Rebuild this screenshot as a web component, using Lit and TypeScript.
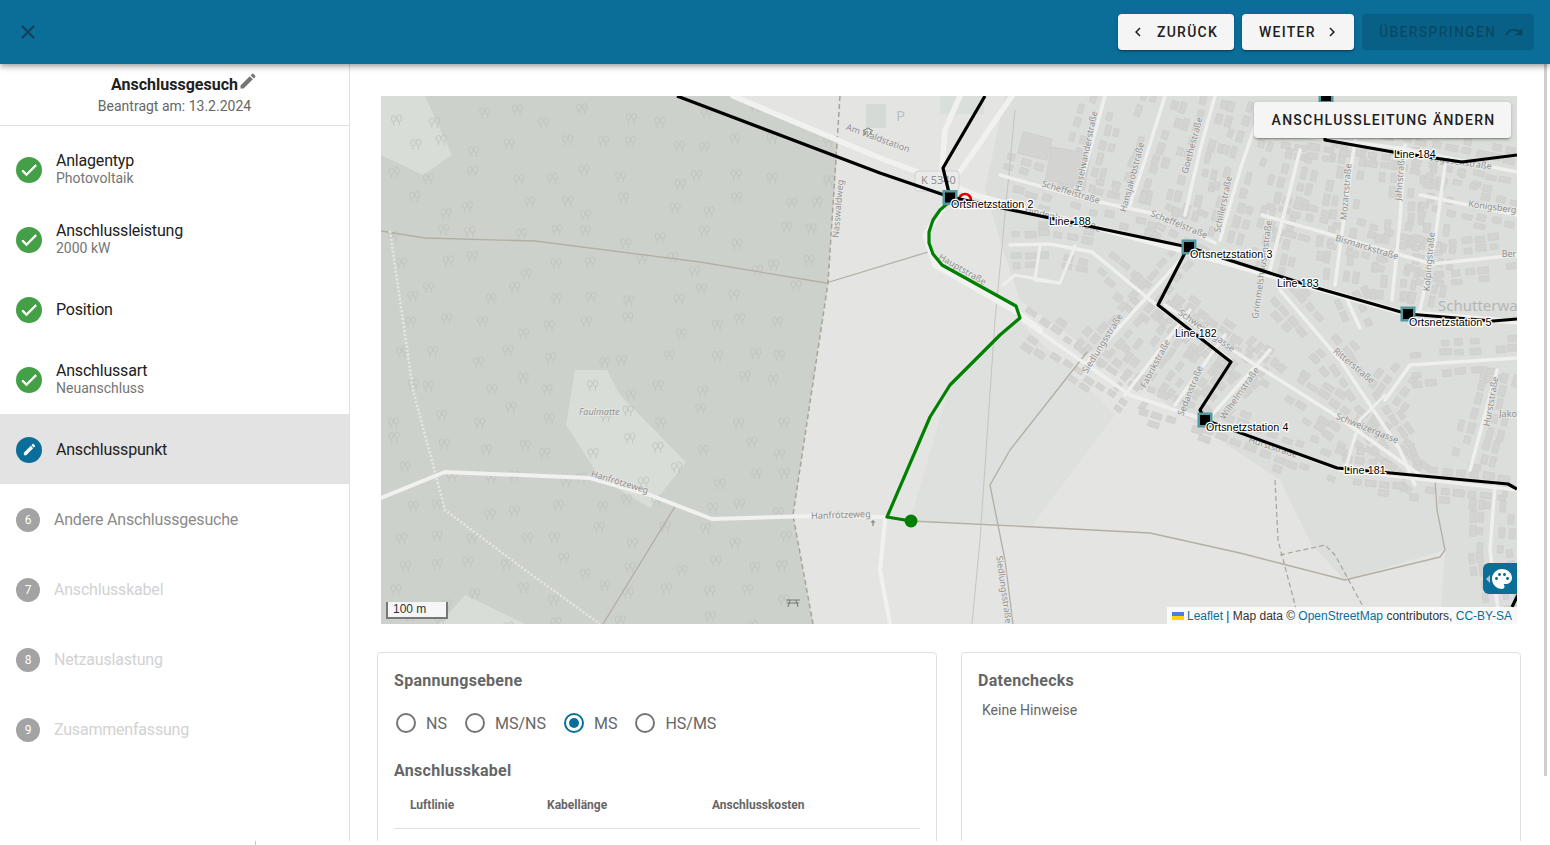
import {LitElement, css, html, svg} from 'lit'
import {customElement} from 'lit/decorators.js'

type Pt = [number, number]

const ICONS = {
  close: 'M19 6.41 17.59 5 12 10.59 6.41 5 5 6.41 10.59 12 5 17.59 6.41 19 12 13.41 17.59 19 19 17.59 13.41 12z',
  check: 'M9 16.17 4.83 12l-1.42 1.41L9 19 21 7l-1.41-1.41z',
  pencil: 'M3 17.25V21h3.75L17.81 9.94l-3.75-3.75L3 17.25zM20.71 7.04c.39-.39.39-1.02 0-1.41l-2.34-2.34c-.39-.39-1.02-.39-1.41 0l-1.83 1.83 3.75 3.75 1.83-1.83z',
  left: 'M15.41 7.41 14 6l-6 6 6 6 1.41-1.41L10.83 12z',
  right: 'M10 6 8.59 7.41 13.17 12l-4.58 4.59L10 18l6-6z',
  redo: 'M18.4 10.6C16.55 8.99 14.15 8 11.5 8c-4.65 0-8.58 3.03-9.96 7.22L3.9 16c1.05-3.19 4.05-5.5 7.6-5.5 1.95 0 3.73.72 5.12 1.88L13 16h9V7l-3.6 3.6z',
  palette: 'M12 2C6.49 2 2 6.49 2 12s4.49 10 10 10c1.38 0 2.5-1.12 2.5-2.5 0-.61-.23-1.2-.64-1.67-.08-.1-.13-.21-.13-.33 0-.28.22-.5.5-.5H16c3.31 0 6-2.69 6-6 0-4.96-4.49-9-10-9zm-5.5 11c-.83 0-1.5-.67-1.5-1.5S5.67 10 6.5 10s1.5.67 1.5 1.5S7.33 13 6.5 13zm3-4C8.67 9 8 8.33 8 7.5S8.67 6 9.5 6s1.5.67 1.5 1.5S10.33 9 9.5 9zm5 0c-.83 0-1.5-.67-1.5-1.5S13.67 6 14.5 6s1.5.67 1.5 1.5S15.33 9 14.5 9zm3 4c-.83 0-1.5-.67-1.5-1.5s.67-1.5 1.5-1.5 1.5.67 1.5 1.5-.67 1.5-1.5 1.5z',
}

const icon = (d: string, size = 24) => html`<svg width=${size} height=${size} viewBox="0 0 24 24" fill="currentColor"><path d=${d}></path></svg>`

const pts = (p: Pt[]) => p.map(q => q.join(',')).join(' ')

// Strassen im Wohngebiet, an ihnen entlang werden die Haeuser erzeugt
const STREETS: Pt[][] = [
  [[1000, 175], [1090, 200], [1160, 215], [1215, 243]],
  [[1105, 96], [1090, 150], [1078, 195]],
  [[1165, 96], [1145, 160], [1130, 205]],
  [[1215, 96], [1200, 150], [1185, 215]],
  [[1262, 105], [1240, 170], [1220, 240]],
  [[1300, 150], [1285, 210], [1270, 270]],
  [[1355, 140], [1345, 210], [1335, 285]],
  [[1405, 145], [1400, 220], [1392, 300]],
  [[1445, 165], [1435, 240], [1420, 310]],
  [[1265, 132], [1400, 148], [1517, 172]],
  [[1262, 215], [1350, 240], [1432, 264], [1517, 255]],
  [[1420, 195], [1517, 215]],
  [[1010, 245], [1050, 244], [1092, 252], [1150, 300], [1230, 360]],
  [[1185, 255], [1135, 310], [1085, 365]],
  [[1165, 305], [1240, 355], [1335, 415], [1420, 475]],
  [[1190, 310], [1125, 395]],
  [[1225, 335], [1175, 405]],
  [[1270, 350], [1212, 415]],
  [[1280, 290], [1340, 360], [1400, 450], [1415, 485]],
  [[1345, 295], [1360, 328]],
  [[1385, 400], [1410, 365], [1517, 358]],
  [[1497, 370], [1470, 470]],
  [[1020, 318], [1130, 395], [1205, 420], [1340, 470], [1517, 490]],
  [[1495, 485], [1490, 550], [1500, 624]],
]

const MINOR_ROADS: Pt[][] = [
  [[1040, 245], [1035, 280], [1060, 283], [1075, 246]],
  [[1003, 285], [1015, 275], [1060, 283]],
  [[1345, 470], [1360, 420], [1385, 395]],
]

const LABELS: [string, number, number, number][] = [
  ['Am Waldstation', 877, 141, 20],
  ['Nasswaldweg', 841, 209, -85],
  ['Hanfrötzeweg', 619, 485, 17],
  ['Hanfrötzeweg', 841, 518, -2],
  ['Hauptstraße', 961, 272, 30],
  ['Siedlungsstraße', 1001, 590, 82],
  ['Scheffelstraße', 1070, 195, 17],
  ['Scheffelstraße', 1178, 227, 22],
  ['Hindenburgstraße', 1062, 222, 15],
  ['Hansjakobstraße', 1135, 178, -75],
  ['Haselwanderstraße', 1089, 152, -78],
  ['Goethestraße', 1195, 146, -75],
  ['Schillerstraße', 1226, 205, -78],
  ['Grimmelshausenstraße', 1265, 270, -82],
  ['Mozartstraße', 1349, 192, -85],
  ['Jahnstraße', 1403, 178, -85],
  ['Kolpingstraße', 1432, 262, -85],
  ['Bismarckstraße', 1366, 250, 17],
  ['Königsberg', 1492, 210, 8],
  ['Vogesenstraße', 1460, 165, 8],
  ['Siedlungsstraße', 1105, 345, -58],
  ['Fabrikstraße', 1158, 365, -62],
  ['Sedanstraße', 1193, 392, -68],
  ['Wilhelmstraße', 1242, 395, -55],
  ['Schweizergasse', 1205, 333, 35],
  ['Ritterstraße', 1352, 368, 40],
  ['Schweizergasse', 1366, 431, 22],
  ['Hurststraße', 1494, 402, -80],
  ['Hurststraße', 1272, 450, 18],
  ['Ber', 1509, 257, 0],
  ['Jako', 1508, 417, 0],
]

function seeded(seed: number) {
  let s = seed
  return () => {
    s = (s * 1664525 + 1013904223) % 4294967296
    return s / 4294967296
  }
}

function buildings() {
  const rnd = seeded(11)
  const out: {x: number, y: number, w: number, h: number, a: number}[] = []
  for (const street of STREETS) {
    for (let i = 0; i < street.length - 1; i++) {
      const [a, b] = [street[i], street[i + 1]]
      const len = Math.hypot(b[0] - a[0], b[1] - a[1])
      const ux = (b[0] - a[0]) / len
      const uy = (b[1] - a[1]) / len
      for (let d = 6; d < len; d += 12 + rnd() * 5) {
        for (const side of [-1, 1]) {
          for (const row of [9, 18]) {
            if (rnd() < (row === 9 ? 0.15 : 0.55)) continue
            const off = row + rnd() * 3
            out.push({
              x: a[0] + ux * d - uy * off * side,
              y: a[1] + uy * d + ux * off * side,
              w: 7 + rnd() * 5,
              h: 5 + rnd() * 2,
              a: Math.atan2(uy, ux) * 180 / Math.PI,
            })
          }
        }
      }
    }
  }
  return out
}

function trees() {
  const rnd = seeded(5)
  const out: Pt[] = []
  for (let y = 100; y < 624; y += 30) {
    for (let x = 385; x < 845; x += 38) {
      out.push([x + rnd() * 26, y + rnd() * 20])
    }
  }
  return out
}

const BUILDINGS = buildings()
const TREES = trees()
const FOREST: Pt[] = [[381, 96], [730, 96], [838, 140], [828, 283], [793, 515], [813, 624], [381, 624]]
const STATIONS: Pt[] = [[950, 197.5], [1189, 247], [1408, 314], [1205, 420], [1326, 96]]

@customElement('grid-map')
export class GridMap extends LitElement {

  static styles = css`
    :host {
      display: block;
      position: relative;
      height: 528px;
      overflow: hidden;
      background: #e4e4e2;
      font-family: "Liberation Sans", Arial, sans-serif;
    }

    .canvas {
      display: block;
    }

    .street-label {
      font: 9px "Noto Sans", sans-serif;
      fill: #8f8f8f;
      paint-order: stroke;
      stroke: rgba(235, 235, 233, 0.8);
      stroke-width: 1.5px;
    }

    .place-label {
      font: 15px "Noto Sans", sans-serif;
      fill: #b4b6b4;
    }

    .grid-label {
      font: 10.7px "Liberation Sans", sans-serif;
      letter-spacing: 0.1px;
      fill: #000;
      paint-order: stroke;
      stroke: #fff;
      stroke-width: 2.5px;
      stroke-linejoin: round;
    }

    .change-line {
      position: absolute;
      top: 6px;
      right: 6px;
      width: 257px;
      height: 36px;
      box-sizing: border-box;
      padding: 0 0 0 2px;
      border: none;
      border-radius: 4px;
      background: #f5f5f5;
      color: #212121;
      font: 500 14px Roboto, sans-serif;
      letter-spacing: 1.25px;
      box-shadow: 0 3px 1px -2px rgba(0,0,0,.2), 0 2px 2px 0 rgba(0,0,0,.14), 0 1px 5px 0 rgba(0,0,0,.12);
    }

    .palette-tab {
      position: absolute;
      right: 0;
      top: 467px;
      width: 34px;
      height: 31px;
      display: flex;
      align-items: center;
      justify-content: flex-end;
      padding-right: 3px;
      box-sizing: border-box;
      border-radius: 6px 0 0 6px;
      background: #0b6e99;
      color: #fff;
    }

    .palette-tab::before {
      content: '';
      position: absolute;
      left: 3px;
      top: 12px;
      border: 4px solid transparent;
      border-left-width: 0;
      border-right-color: #a9c5d2;
    }

    .scale {
      position: absolute;
      left: 5px;
      bottom: 5px;
      width: 62px;
      height: 17px;
      box-sizing: border-box;
      padding-left: 5px;
      border: 2px solid #777;
      border-top: none;
      background: rgba(255, 255, 255, 0.8);
      color: #333;
      font-size: 12px;
      line-height: 15px;
    }

    .attribution {
      position: absolute;
      right: 0;
      bottom: 0;
      height: 17px;
      display: flex;
      align-items: center;
      gap: 3px;
      padding: 0 5px;
      white-space: pre;
      background: rgba(255, 255, 255, 0.8);
      color: #333;
      font-size: 12px;
    }

    .attribution a {
      color: #0b6e99;
    }
  `

  render() {
    return html`
      <svg class="canvas" width="1136" height="528" viewBox="381 96 1136 528">
        <defs>
          <clipPath id="forest"><polygon points=${pts(FOREST)}></polygon></clipPath>
          <g id="tree" fill="none" stroke="#bdc2bb" stroke-width="0.8">
            <ellipse cx="2.5" cy="4" rx="2.3" ry="3.2"></ellipse>
            <path d="M2.5 7.2V11"></path>
            <ellipse cx="8" cy="3.5" rx="2.3" ry="3.2"></ellipse>
            <path d="M8 6.7V11"></path>
          </g>
        </defs>

        <polygon fill="#dcdedc" points="1005,96 1517,96 1517,624 1440,624 1445,550 1345,580 1312,545 1280,480 1190,420 1090,350 1020,300 1000,240 985,190"></polygon>
        <polygon fill="#dde0dc" points="910,521 1030,528 1115,415 1018,320 950,385"></polygon>
        <polygon fill="#e4e4e2" points="1115,415 1190,478 1230,505 1200,530 1030,528"></polygon>
        <rect x="866" y="104" width="20" height="24" fill="#d4dbd6"></rect>
        <rect x="940" y="96" width="44" height="18" fill="#d9dfda"></rect>
        <polygon fill="#cdd1cb" points=${pts(FOREST)}></polygon>
        <polygon fill="#d9ddd8" points="381,96 425,96 452,155 423,175 381,155"></polygon>
        <polygon fill="#d9ddd8" points="575,370 607,370 620,395 686,462 650,508 600,478 566,425"></polygon>
        <polygon fill="#d9ddd8" points="440,624 465,595 525,624"></polygon>
        <g clip-path="url(#forest)">
          ${TREES.map(t => svg`<use href="#tree" x=${t[0]} y=${t[1]}></use>`)}
        </g>

        <g fill="#d3d3d1" stroke="#cbcbc9" stroke-width="0.6">
          ${BUILDINGS.map(b => svg`<rect x=${-b.w / 2} y=${-b.h / 2} width=${b.w} height=${b.h}
            transform="translate(${b.x} ${b.y}) rotate(${b.a})"></rect>`)}
          <rect x="1048" y="150" width="40" height="34" transform="rotate(10 1068 167)"></rect>
          <rect x="1020" y="135" width="30" height="22" transform="rotate(14 1035 146)"></rect>
        </g>

        <g fill="none" stroke-linejoin="round" stroke-linecap="round">
          <g stroke="#b3afa4" stroke-width="1.3">
            <polyline points="381,231 425,238 535,241 700,262 826,283 928,252"></polyline>
            <polyline points="676,505 603,624"></polyline>
            <polyline points="911,521 1035,527 1150,533 1240,553 1345,580 1440,557 1445,550 1437,510 1435,480"></polyline>
            <polyline points="1087,352 1010,450 990,485 1005,560 1013,624"></polyline>
          </g>
          <polyline stroke="#bdbdbb" stroke-width="0.8" points="1015,110 995,320 980,540 972,624"></polyline>
          <polyline stroke="#a8a498" stroke-width="1.5" stroke-dasharray="5 3" stroke-linecap="butt" points="840,96 828,283 793,515 813,624"></polyline>
          <polyline stroke="#a8a498" stroke-width="1.2" stroke-dasharray="5 3" stroke-linecap="butt" points="1275,480 1278,540 1300,624"></polyline>
          <polyline stroke="#a8a498" stroke-width="1.2" stroke-dasharray="5 3" stroke-linecap="butt" points="1280,555 1325,545 1335,555 1365,610"></polyline>
          <polyline stroke="#e6e6e3" stroke-width="2.5" stroke-dasharray="2 2" stroke-linecap="butt" points="390,231 413,390 445,510 525,570 600,624"></polyline>

          <g stroke="#efefed" stroke-width="3.5">
            ${STREETS.map(s => svg`<polyline points=${pts(s)}></polyline>`)}
          </g>
          <g stroke="#eeeeec" stroke-width="3">
            ${MINOR_ROADS.map(s => svg`<polyline points=${pts(s)}></polyline>`)}
          </g>
          <g stroke="#f1f1ef" stroke-width="5.5">
            <polyline points="733,96 880,158 945,182 975,195 1188,252 1400,312 1517,322"></polyline>
            <polyline points="1012,96 975,150 955,178"></polyline>
            <polyline points="960,96 945,130 942,170"></polyline>
            <polyline points="948,200 925,235 935,265 1017,312 1040,330"></polyline>
          </g>
          <g stroke="#f1f1ef" stroke-width="4">
            <polyline points="381,498 445,472 590,478 650,495 712,519 810,516 885,517"></polyline>
            <polyline points="885,520 880,570 890,624"></polyline>
          </g>
        </g>

        <rect x="915" y="171" width="44" height="20" rx="3" fill="#eaeaea" stroke="#d2d2d2"></rect>
        <text class="place-label" x="1438" y="311">Schutterwa</text>
        <text class="street-label" x="921" y="184" style="font-size: 11px">K 5340</text>
        <text class="street-label" x="579" y="415" style="font-style: italic">Faulmatte</text>
        <text class="street-label" x="896" y="121" style="font-size: 15px; fill: #b9c0bc">P</text>
        ${LABELS.map(l => svg`<text class="street-label" text-anchor="middle" transform="translate(${l[1]} ${l[2]}) rotate(${l[3]})">${l[0]}</text>`)}

        <g fill="none" stroke="#6f7a6f" stroke-width="1">
          <path d="M787 603h12M786 600h14M790 600l-2 7M796 600l2 7"></path>
          <path d="M873 520v6M871 522h4"></path>
          <path d="M863 131l5-3 5 3M865 131v4M871 131v4"></path>
        </g>

        <circle cx="965" cy="200" r="6" fill="#f1f1ef" stroke="#e00000" stroke-width="2.6"></circle>

        <g fill="none" stroke="#000" stroke-width="3.2" stroke-linejoin="round">
          <polyline points="677,96 880,173 950,197"></polyline>
          <polyline points="985,96 943,168 950,197"></polyline>
          <polyline points="950,197 1188,247"></polyline>
          <polyline points="1188,247 1158,305 1231,362 1200,410 1205,420"></polyline>
          <polyline points="1188,247 1317,288 1408,314 1493,321 1517,319"></polyline>
          <polyline points="1205,420 1337,468 1508,484 1517,489"></polyline>
          <polyline points="1325,96 1325,140 1393,152 1462,162 1517,155"></polyline>
          <polyline points="1518,595 1512,607"></polyline>
        </g>

        <polyline fill="none" stroke="#008000" stroke-width="3.2" stroke-linejoin="round"
          points="948,203 940,210 933,220 929,232 929,243 933,254 942,265 1016,306 1020,318 1000,335 950,385 930,417 887,517 911,521"></polyline>
        <circle cx="911" cy="521" r="6.5" fill="#008000"></circle>

        ${STATIONS.map(s => svg`
          <rect x=${s[0] - 7.5} y=${s[1] - 7.5} width="15" height="15" fill="#52989f"></rect>
          <rect x=${s[0] - 5} y=${s[1] - 5} width="10" height="10" fill="#000"></rect>`)}

        <text class="grid-label" x="951" y="208">Ortsnetzstation 2</text>
        <text class="grid-label" x="1190" y="258">Ortsnetzstation 3</text>
        <text class="grid-label" x="1409" y="326">Ortsnetzstation 5</text>
        <text class="grid-label" x="1206" y="431">Ortsnetzstation 4</text>
        <text class="grid-label" x="1049" y="225">Line 188</text>
        <text class="grid-label" x="1277" y="287">Line 183</text>
        <text class="grid-label" x="1175" y="337">Line 182</text>
        <text class="grid-label" x="1344" y="474">Line 181</text>
        <text class="grid-label" x="1394" y="158">Line 184</text>
      </svg>

      <button class="change-line">ANSCHLUSSLEITUNG ÄNDERN</button>
      <div class="palette-tab">${icon(ICONS.palette)}</div>
      <div class="scale">100 m</div>
      <div class="attribution"><svg width="12" height="8" viewBox="0 0 12 8"><rect width="12" height="4" fill="#4C7BE1"></rect><rect y="4" width="12" height="4" fill="#FFD500"></rect></svg><span><a>Leaflet</a> | Map data © <a>OpenStreetMap</a> contributors, <a>CC-BY-SA</a></span></div>
    `
  }
}

const STEPS = [
  {label: 'Anlagentyp', sub: 'Photovoltaik', state: 'done'},
  {label: 'Anschlussleistung', sub: '2000 kW', state: 'done'},
  {label: 'Position', state: 'done'},
  {label: 'Anschlussart', sub: 'Neuanschluss', state: 'done'},
  {label: 'Anschlusspunkt', state: 'active'},
  {label: 'Andere Anschlussgesuche', state: 'open', num: 6},
  {label: 'Anschlusskabel', state: 'locked', num: 7},
  {label: 'Netzauslastung', state: 'locked', num: 8},
  {label: 'Zusammenfassung', state: 'locked', num: 9},
]

@customElement('app-root')
export class AppRoot extends LitElement {

  static styles = css`
    :host {
      display: block;
      position: relative;
      height: 845px;
      overflow: hidden;
      background: #fff;
      color: #212121;
      font-family: Roboto, sans-serif;
    }

    .topbar {
      position: relative;
      z-index: 2;
      height: 64px;
      display: flex;
      align-items: center;
      gap: 8px;
      padding: 0 16px;
      background: #0b6e99;
      box-shadow: 0 2px 4px -1px rgba(0,0,0,.2), 0 4px 5px 0 rgba(0,0,0,.14), 0 1px 10px 0 rgba(0,0,0,.12);
    }

    .close {
      display: flex;
      margin-right: auto;
      color: #143f5a;
    }

    .btn {
      height: 36px;
      display: flex;
      align-items: center;
      box-sizing: border-box;
      border-radius: 4px;
      background: #f5f5f5;
      color: #212121;
      font-size: 14px;
      font-weight: 500;
      letter-spacing: 1.25px;
      box-shadow: 0 3px 1px -2px rgba(0,0,0,.2), 0 2px 2px 0 rgba(0,0,0,.14), 0 1px 5px 0 rgba(0,0,0,.12);
    }

    .btn.back {
      width: 116px;
      gap: 10px;
      padding-left: 11px;
    }

    .btn.next {
      width: 112px;
      gap: 7px;
      padding-left: 17px;
    }

    .btn.skip {
      width: 172px;
      gap: 8px;
      padding-left: 17px;
      background: rgba(0, 0, 0, 0.12);
      color: rgba(0, 0, 0, 0.26);
      box-shadow: none;
    }

    .body {
      height: 777px;
      display: flex;
      overflow: hidden;
    }

    .sidebar {
      width: 350px;
      flex: none;
      box-sizing: border-box;
      border-right: 1px solid #e0e0e0;
    }

    .request {
      height: 62px;
      box-sizing: border-box;
      padding-top: 11px;
      border-bottom: 1px solid #e0e0e0;
      text-align: center;
    }

    .request-title {
      position: relative;
      width: max-content;
      margin: 0 auto;
      height: 20px;
      font-size: 16px;
      font-weight: 700;
      line-height: 20px;
    }

    .request-title span {
      position: absolute;
      left: 100%;
      top: -4px;
      display: flex;
      color: #757575;
    }

    .request-date {
      margin-top: 1px;
      color: #666;
      font-size: 14px;
      line-height: 20px;
    }

    .steps {
      padding-top: 8px;
    }

    .step {
      height: 70px;
      display: flex;
      align-items: center;
      box-sizing: border-box;
      padding: 1px 0 0 16px;
    }

    .step.active {
      background: #e3e3e3;
    }

    .bullet {
      width: 26px;
      height: 26px;
      flex: none;
      display: flex;
      align-items: center;
      justify-content: center;
      margin-right: 14px;
      border-radius: 50%;
      color: #fff;
    }

    .done .bullet svg {
      stroke: #fff;
      stroke-width: 1.2;
    }

    .done .bullet {
      background: #43a047;
    }

    .active .bullet {
      background: #0b6e99;
    }

    .open .bullet,
    .locked .bullet {
      width: 24px;
      height: 24px;
      background: #a3a3a3;
      font-size: 12px;
    }

    .step-label {
      font-size: 16px;
      letter-spacing: -0.2px;
      line-height: 18px;
    }

    .step-sub {
      margin-bottom: 2px;
      color: #757575;
      font-size: 14px;
      line-height: 16px;
    }

    .open .step-label {
      color: #8a8a8a;
    }

    .locked .step-label {
      color: #d2d2d2;
    }

    .content {
      flex: 1;
      min-width: 0;
      padding: 32px 29px 0 27px;
    }

    .map-wrap {
      margin: 0 4px 28px;
    }

    .cards {
      display: grid;
      grid-template-columns: 560px 560px;
      gap: 24px;
    }

    .card {
      height: 300px;
      box-sizing: border-box;
      padding: 16px;
      border: 1px solid #e0e0e0;
      border-radius: 4px;
      color: #666;
    }

    .card-title {
      font-size: 16px;
      font-weight: 700;
      letter-spacing: 0.28px;
      line-height: 24px;
    }

    .radios {
      display: flex;
      gap: 16px;
      margin: 18px 0 24px;
    }

    .radio {
      display: flex;
      align-items: center;
      gap: 10px;
      height: 24px;
      margin-left: 2px;
      font-size: 16px;
    }

    .radio-dot {
      width: 20px;
      height: 20px;
      box-sizing: border-box;
      display: flex;
      align-items: center;
      justify-content: center;
      border: 2px solid #757575;
      border-radius: 50%;
    }

    .radio.on .radio-dot {
      border-color: #0b6e99;
    }

    .radio.on .radio-dot::after {
      content: '';
      width: 10px;
      height: 10px;
      border-radius: 50%;
      background: #0b6e99;
    }

    .cable-head {
      display: grid;
      grid-template-columns: 137px 165px 1fr;
      height: 46px;
      box-sizing: border-box;
      padding: 12px 16px 0;
      border-bottom: 1px solid #e0e0e0;
      font-size: 12px;
      font-weight: 700;
      line-height: 20px;
    }

    .hint {
      margin: 7px 0 0 4px;
      font-size: 14px;
      line-height: 20px;
    }

    .scrollbar {
      position: absolute;
      top: 64px;
      right: 3px;
      width: 3px;
      height: 712px;
      background: #cfcfcf;
    }

    .footer-mark {
      position: absolute;
      left: 255px;
      top: 841px;
      width: 1px;
      height: 4px;
      background: #c8c8c8;
    }
  `

  render() {
    return html`
      <header class="topbar">
        <span class="close">${icon(ICONS.close)}</span>
        <div class="btn back">${icon(ICONS.left, 18)}ZURÜCK</div>
        <div class="btn next">WEITER${icon(ICONS.right, 18)}</div>
        <div class="btn skip">ÜBERSPRINGEN${icon(ICONS.redo, 20)}</div>
      </header>
      <div class="body">
        <aside class="sidebar">
          <div class="request">
            <div class="request-title">Anschlussgesuch<span>${icon(ICONS.pencil, 20)}</span></div>
            <div class="request-date">Beantragt am: 13.2.2024</div>
          </div>
          <div class="steps">
            ${STEPS.map(s => html`
              <div class="step ${s.state}">
                <div class="bullet">
                  ${s.state === 'done' ? icon(ICONS.check, 20) : s.state === 'active' ? icon(ICONS.pencil, 15) : s.num}
                </div>
                <div>
                  <div class="step-label">${s.label}</div>
                  ${s.sub ? html`<div class="step-sub">${s.sub}</div>` : ''}
                </div>
              </div>
            `)}
          </div>
        </aside>
        <main class="content">
          <div class="map-wrap"><grid-map></grid-map></div>
          <div class="cards">
            <section class="card">
              <div class="card-title">Spannungsebene</div>
              <div class="radios">
                ${['NS', 'MS/NS', 'MS', 'HS/MS'].map(r => html`
                  <div class="radio ${r === 'MS' ? 'on' : ''}"><span class="radio-dot"></span>${r}</div>
                `)}
              </div>
              <div class="card-title">Anschlusskabel</div>
              <div class="cable-head">
                <span>Luftlinie</span><span>Kabellänge</span><span>Anschlusskosten</span>
              </div>
            </section>
            <section class="card">
              <div class="card-title">Datenchecks</div>
              <div class="hint">Keine Hinweise</div>
            </section>
          </div>
        </main>
      </div>
      <div class="scrollbar"></div>
      <div class="footer-mark"></div>
    `
  }
}
